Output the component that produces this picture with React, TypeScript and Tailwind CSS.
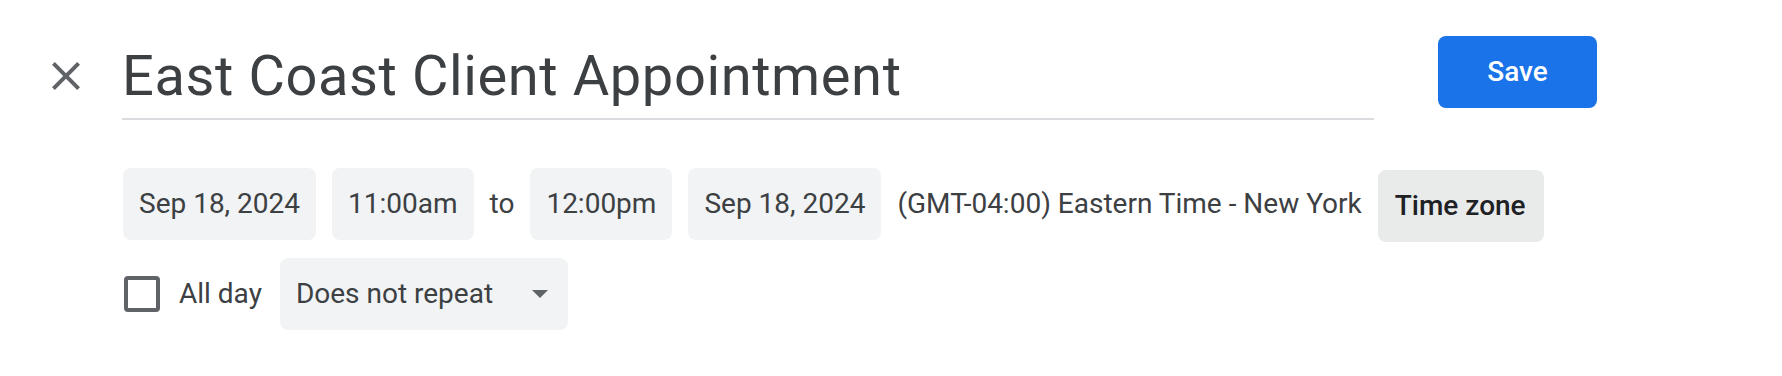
import React from "react";

function Chip({ children }: { children: React.ReactNode }) {
  return (
    <div className="h-[72px] px-4 rounded-[8px] bg-[#f1f3f4] flex items-center text-[28px] text-[#3c4043] whitespace-nowrap">
      {children}
    </div>
  );
}

export default function App() {
  return (
    <div
      className="w-[1782px] h-[376px] bg-white overflow-hidden"
      style={{ fontFamily: "Roboto, 'Liberation Sans', Arial, sans-serif" }}
    >
      {/* Header row */}
      <div className="flex items-start pl-[42px] pt-[36px]">
        <button className="w-12 h-12 mt-[16px] flex items-center justify-center shrink-0">
          <svg width="48" height="48" viewBox="0 0 24 24" fill="#5f6368">
            <path d="M19 6.41L17.59 5 12 10.59 6.41 5 5 6.41 10.59 12 5 17.59 6.41 19 12 13.41 17.59 19 19 17.59 13.41 12z" />
          </svg>
        </button>
        <div className="ml-[32px] w-[1252px] pt-[8px] pb-[10px] border-b-2 border-[#dadce0] shrink-0">
          <div className="h-[64px] leading-[64px] text-[56px] text-[#3c4043] tracking-[0.6px] whitespace-nowrap">
            East Coast Client Appointment
          </div>
        </div>
        <button className="ml-[64px] w-[159px] h-[72px] rounded-[8px] bg-[#1a73e8] text-white text-[28px] font-medium flex items-center justify-center shrink-0">
          Save
        </button>
      </div>

      {/* Date/time row */}
      <div className="flex items-start gap-4 pl-[123px] mt-[48px]">
        <Chip>Sep 18, 2024</Chip>
        <Chip>11:00am</Chip>
        <div className="h-[72px] flex items-center text-[28px] text-[#3c4043]">to</div>
        <Chip>12:00pm</Chip>
        <Chip>Sep 18, 2024</Chip>
        <div className="h-[72px] flex items-center text-[28px] text-[#3c4043] whitespace-nowrap">
          (GMT-04:00) Eastern Time - New York
        </div>
        <button className="mt-[2px] h-[72px] pl-[17px] pr-[18px] rounded-[8px] bg-[#e9ebeb] text-[28px] font-medium text-[#202124] flex items-center whitespace-nowrap">
          Time zone
        </button>
      </div>

      {/* All day / repeat row */}
      <div className="flex items-center pl-[124px] mt-[16px]">
        <div className="w-[36px] h-[36px] border-[4px] border-[#5f6368] rounded-[4px] shrink-0" />
        <span className="ml-[19px] text-[28px] text-[#3c4043] whitespace-nowrap">All day</span>
        <div className="ml-[18px] h-[72px] pl-4 pr-[20px] rounded-[8px] bg-[#f1f3f4] flex items-center text-[28px] text-[#3c4043] whitespace-nowrap">
          <span>Does not repeat</span>
          <svg className="ml-[39px]" width="16" height="8" viewBox="0 0 16 8" fill="#5f6368">
            <polygon points="0,0 16,0 8,8" />
          </svg>
        </div>
      </div>
    </div>
  );
}
